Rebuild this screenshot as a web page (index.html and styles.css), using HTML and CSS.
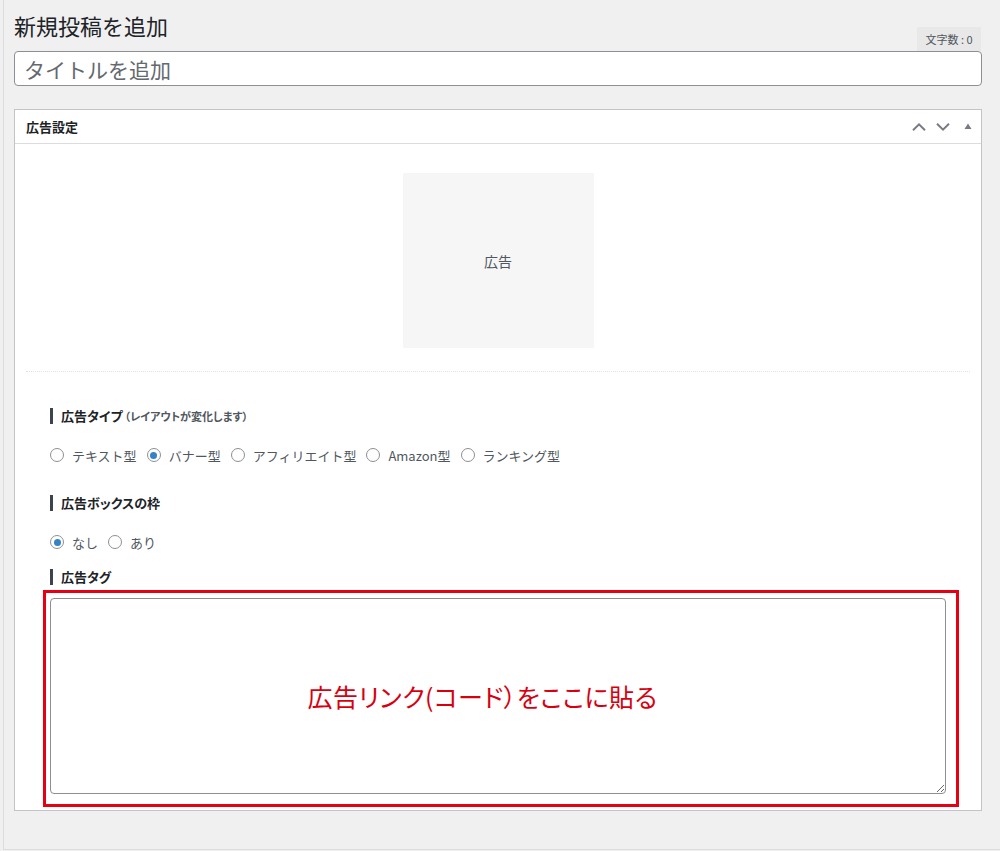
FILE: index.html
```html
<!DOCTYPE html>
<html lang="ja">
<head>
<meta charset="utf-8">
<title>新規投稿を追加</title>
<link rel="stylesheet" href="styles.css">
</head>
<body>
<div class="frame">
  <div class="top-row">
    <h1 class="page-title">新規投稿を追加</h1>
    <div class="counter">文字数 : 0</div>
  </div>
  <input class="title-input" type="text" placeholder="タイトルを追加">
  <section class="panel">
    <header class="panel-head">
      <h2 class="panel-title">広告設定</h2>
      <div class="panel-tools">
        <svg class="chev" width="14" height="8" viewBox="0 0 14 8"><path d="M1 7.2 L7 1.4 L13 7.2" fill="none" stroke="#787c82" stroke-width="2"/></svg>
        <svg class="chev" width="14" height="8" viewBox="0 0 14 8"><path d="M1 0.8 L7 6.6 L13 0.8" fill="none" stroke="#787c82" stroke-width="2"/></svg>
        <svg class="tri" width="8" height="6" viewBox="0 0 8 6"><polygon points="0.5,6 4,0.5 7.5,6" fill="#787c82"/></svg>
      </div>
    </header>
    <div class="panel-body">
      <div class="ad-preview">広告</div>
      <hr class="sep">
      <div class="settings">
        <div class="field-label">広告タイプ<span class="note">（レイアウトが変化します）</span></div>
        <div class="radio-row">
          <label class="radio"><span class="dot"></span>テキスト型</label>
          <label class="radio"><span class="dot checked"></span>バナー型</label>
          <label class="radio"><span class="dot"></span>アフィリエイト型</label>
          <label class="radio"><span class="dot"></span>Amazon型</label>
          <label class="radio"><span class="dot"></span>ランキング型</label>
        </div>
        <div class="field-label gap-lg">広告ボックスの枠</div>
        <div class="radio-row">
          <label class="radio"><span class="dot checked"></span>なし</label>
          <label class="radio"><span class="dot"></span>あり</label>
        </div>
        <div class="field-label gap-sm">広告タグ</div>
        <div class="red-box">
          <div class="ta-wrap">
            <textarea class="tag-area"></textarea>
            <div class="annot">広告リンク(コード）をここに貼る</div>
          </div>
        </div>
      </div>
    </div>
  </section>
</div>
</body>
</html>
```

FILE: styles.css
```css
* { box-sizing: border-box; }
html, body { margin: 0; }
body {
  background: #f0f0f1;
  font-family: "Noto Sans CJK JP", "Noto Sans", sans-serif;
  color: #1d2327;
}
.frame {
  margin-left: 3px;
  height: 850px;
  border-left: 1px solid #dcdcde;
  border-bottom: 1px solid #dcdcde;
  padding: 0 18px 0 10px;
}
.top-row {
  display: flex;
  justify-content: space-between;
  align-items: flex-end;
  height: 51px;
}
.page-title {
  margin: 0 0 11px;
  font-size: 22px;
  line-height: 30px;
  font-weight: 400;
  color: #1d2327;
}
.counter {
  width: 64px;
  height: 24px;
  margin-right: 1px;
  background: #e8e8e9;
  color: #50575e;
  font-size: 11px;
  line-height: 24px;
  text-align: center;
}
.title-input {
  display: block;
  width: 100%;
  height: 35px;
  margin: 0;
  border: 1px solid #8c8f94;
  border-radius: 4px;
  background: #fff;
  padding: 0 9px;
  font-family: inherit;
  font-size: 21px;
  color: #1d2327;
}
.title-input::placeholder { color: #646970; }
.panel {
  margin-top: 23px;
  background: #fff;
  border: 1px solid #c3c4c7;
}
.panel-head {
  height: 34px;
  border-bottom: 1px solid #dcdcde;
  display: flex;
  align-items: center;
  justify-content: space-between;
  padding: 0 9px 0 11px;
}
.panel-title {
  margin: 0;
  font-size: 13px;
  font-weight: 700;
  color: #1d2327;
}
.panel-tools {
  display: flex;
  align-items: center;
}
.chev { display: block; margin-left: 10px; }
.tri { display: block; margin-left: 14px; margin-top: -2px; }
.panel-body {
  padding: 29px 0 3px;
}
.ad-preview {
  width: 191px;
  height: 175px;
  margin: 0 auto;
  background: #f6f6f6;
  color: #50575e;
  font-size: 14px;
  display: flex;
  align-items: center;
  justify-content: center;
}
.sep {
  margin: 23px 11px 0;
  height: 0;
  border: 0;
  border-top: 1px dotted #e2e2e2;
}
.settings {
  padding: 36px 35px 0;
}
.field-label {
  border-left: 3px solid #3c434a;
  padding-left: 8px;
  font-size: 13px;
  font-weight: 700;
  line-height: 16px;
  color: #1d2327;
  font-feature-settings: "palt";
}
.field-label .note {
  font-size: 11px;
  font-weight: 700;
  color: #50575e;
  margin-left: 2px;
}
.gap-lg { margin-top: 30px; }
.gap-sm { margin-top: 17px; }
.radio-row {
  margin-top: 21px;
  height: 20px;
  display: flex;
  align-items: center;
  gap: 10px;
}
.radio {
  display: inline-flex;
  align-items: center;
  gap: 8px;
  font-size: 13px;
  color: #50575e;
}
.dot {
  width: 14px;
  height: 14px;
  border: 1px solid #8c8f94;
  border-radius: 50%;
  background: #fff;
  display: flex;
  align-items: center;
  justify-content: center;
}
.dot.checked::after {
  content: "";
  width: 7px;
  height: 7px;
  border-radius: 50%;
  background: #3582c4;
}
.red-box {
  margin: 5px -13px 0 -7px;
  border: 3px solid #e60012;
  padding: 5px 10px 10px 4px;
}
.ta-wrap {
  display: grid;
}
.tag-area {
  grid-area: 1 / 1;
  display: block;
  width: 100%;
  height: 196px;
  margin: 0;
  border: 1px solid #8c8f94;
  border-radius: 4px;
  background: #fff;
  resize: vertical;
  font-family: inherit;
}
.annot {
  grid-area: 1 / 1;
  align-self: center;
  justify-self: center;
  margin-right: 31px;
  pointer-events: none;
  color: #d7000f;
  font-size: 25px;
  letter-spacing: 0.5px;
  line-height: 30px;
  font-feature-settings: "palt";
}
```
